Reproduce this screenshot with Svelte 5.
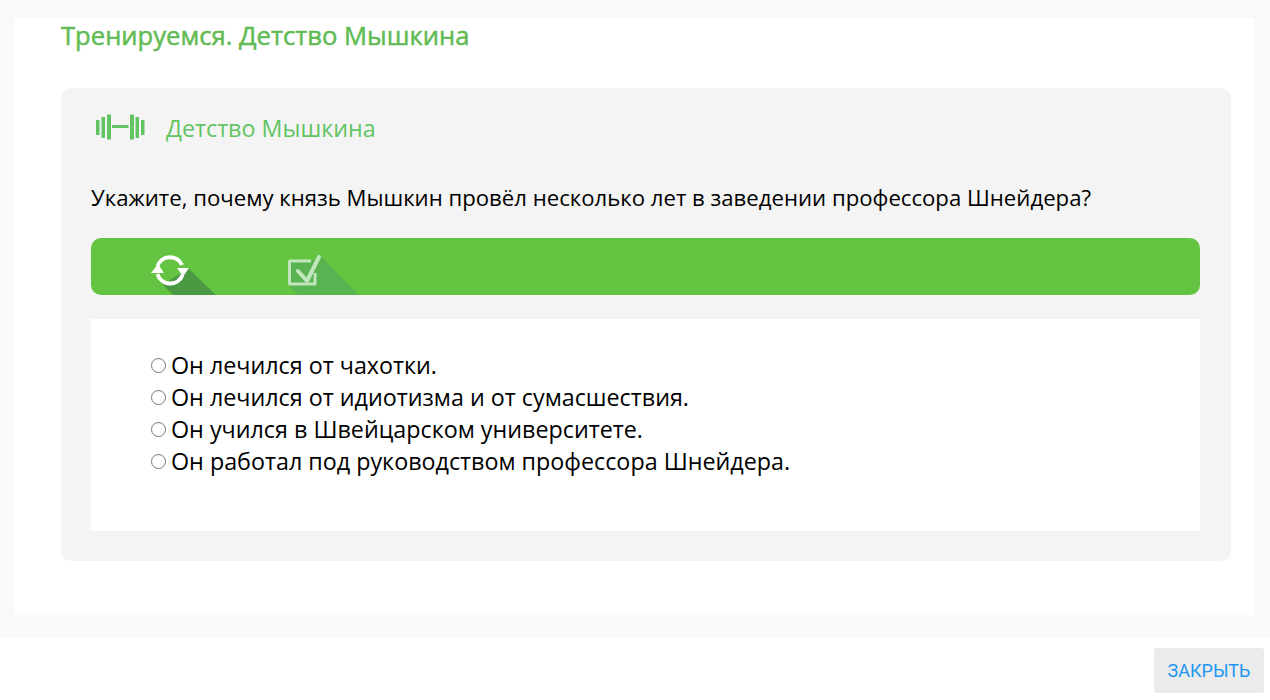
<script>
  const answers = [
    "Он лечился от чахотки.",
    "Он лечился от идиотизма и от сумасшествия.",
    "Он учился в Швейцарском университете.",
    "Он работал под руководством профессора Шнейдера.",
  ];
</script>

<div class="page">
  <main class="panel">
    <h1 class="title">Тренируемся. Детство Мышкина</h1>

    <section class="card">
      <header class="card-head">
        <svg class="dumbbell" width="50" height="26" viewBox="0 0 50 26" fill="#62c462">
          <rect x="1" y="6" width="3.5" height="15" />
          <rect x="6.5" y="3" width="3.5" height="21" />
          <rect x="12" y="0.5" width="4" height="25" />
          <rect x="17" y="11" width="16.5" height="3" />
          <rect x="35" y="0.5" width="4" height="25" />
          <rect x="40.5" y="3" width="3.5" height="21" />
          <rect x="46" y="6" width="3.5" height="15" />
        </svg>
        <h2 class="card-title">Детство Мышкина</h2>
      </header>

      <p class="question">Укажите, почему князь Мышкин провёл несколько лет в заведении профессора Шнейдера?</p>

      <div class="toolbar">
        <button class="tool" type="button" aria-label="Повторить">
          <svg width="80" height="57" viewBox="0 0 80 57">
            <polygon points="22,47 32,57 75,57 47,30" fill="#4b9a43" />
            <g fill="none" stroke="#fff" stroke-width="4">
              <path d="M16.5 28 A13.2 13.2 0 0 1 41 27" />
              <path d="M41.5 37 A13.2 13.2 0 0 1 16.5 36" />
            </g>
            <polygon points="10,35 23,35 17,26" fill="#fff" />
            <polygon points="36,30 48,30 42,38.5" fill="#fff" />
          </svg>
        </button>
        <button class="tool" type="button" aria-label="Проверить">
          <svg width="80" height="57" viewBox="0 0 80 57">
            <polygon points="9,47 19,57 79,57 41,17 36,22 10,22" fill="#58b350" />
            <g fill="none" stroke="#c0e6ba" stroke-width="3">
              <path d="M36 35 V46 H10.5 V23 H32" stroke-linejoin="round" />
              <path d="M19 33 L28 43 L40 19" stroke-width="4" stroke-linecap="round" stroke-linejoin="round" />
            </g>
          </svg>
        </button>
      </div>

      <div class="answers">
        {#each answers as answer}
          <label class="answer">
            <input type="radio" name="answer" />{answer}
          </label>
        {/each}
      </div>
    </section>
  </main>

  <footer class="footer">
    <button class="close" type="button">ЗАКРЫТЬ</button>
  </footer>
</div>

<style>
  :global(body) {
    margin: 0;
    background: #f9f9f9;
    font-family: "Open Sans", sans-serif;
  }

  .page {
    height: 700px;
    display: flex;
    flex-direction: column;
    padding-top: 18px;
    box-sizing: border-box;
  }

  .panel {
    height: 597px;
    margin: 0 16px 23px 14px;
    padding: 0 23px 0 47px;
    background: #fff;
    box-sizing: border-box;
  }

  .title {
    margin: 0;
    height: 70px;
    font-size: 25.6px;
    line-height: 35px;
    font-weight: 400;
    -webkit-text-stroke: 0.5px #62bb53;
    color: #62bb53;
  }

  .card {
    height: 473px;
    padding: 0 31px 0 30px;
    background: #f4f4f4;
    border-radius: 10px;
    box-sizing: border-box;
  }

  .card-head {
    display: flex;
    align-items: center;
    height: 80px;
    gap: 21px;
    padding-left: 4px;
  }

  .dumbbell {
    flex: none;
    margin-bottom: 2px;
    filter: blur(0.4px);
  }

  .card-title {
    margin: 0;
    font-size: 23.3px;
    font-weight: 400;
    color: #62c462;
  }

  .question {
    margin: 0;
    height: 70px;
    padding-top: 15px;
    box-sizing: border-box;
    font-size: 22.16px;
    line-height: 28px;
    color: #000;
  }

  .toolbar {
    display: flex;
    height: 57px;
    padding-left: 50px;
    gap: 58px;
    background: #64c441;
    border-radius: 10px;
    overflow: hidden;
  }

  .tool {
    width: 80px;
    height: 57px;
    padding: 0;
    border: 0;
    background: none;
  }

  .tool svg {
    display: block;
    overflow: visible;
    filter: blur(0.3px);
  }

  .answers {
    display: flex;
    flex-direction: column;
    height: 212px;
    margin-top: 24px;
    padding: 30px 60px;
    background: #fff;
    box-sizing: border-box;
  }

  .answer {
    display: flex;
    align-items: center;
    height: 32px;
    font-size: 23.3px;
    color: #000;
  }

  .answer input {
    appearance: none;
    width: 15px;
    height: 15px;
    margin: 0 5px 0 0;
    border: 1px solid #767676;
    border-radius: 50%;
    background: #fff;
    box-sizing: border-box;
  }

  .footer {
    flex: 1;
    display: flex;
    justify-content: flex-end;
    align-items: flex-start;
    padding: 10px 6px 0 0;
    background: #fff;
  }

  .close {
    width: 110px;
    height: 45px;
    border: 0;
    border-radius: 3px;
    background: #ebebeb;
    color: #2196f3;
    font-family: Roboto, sans-serif;
    font-size: 18px;
  }
</style>
